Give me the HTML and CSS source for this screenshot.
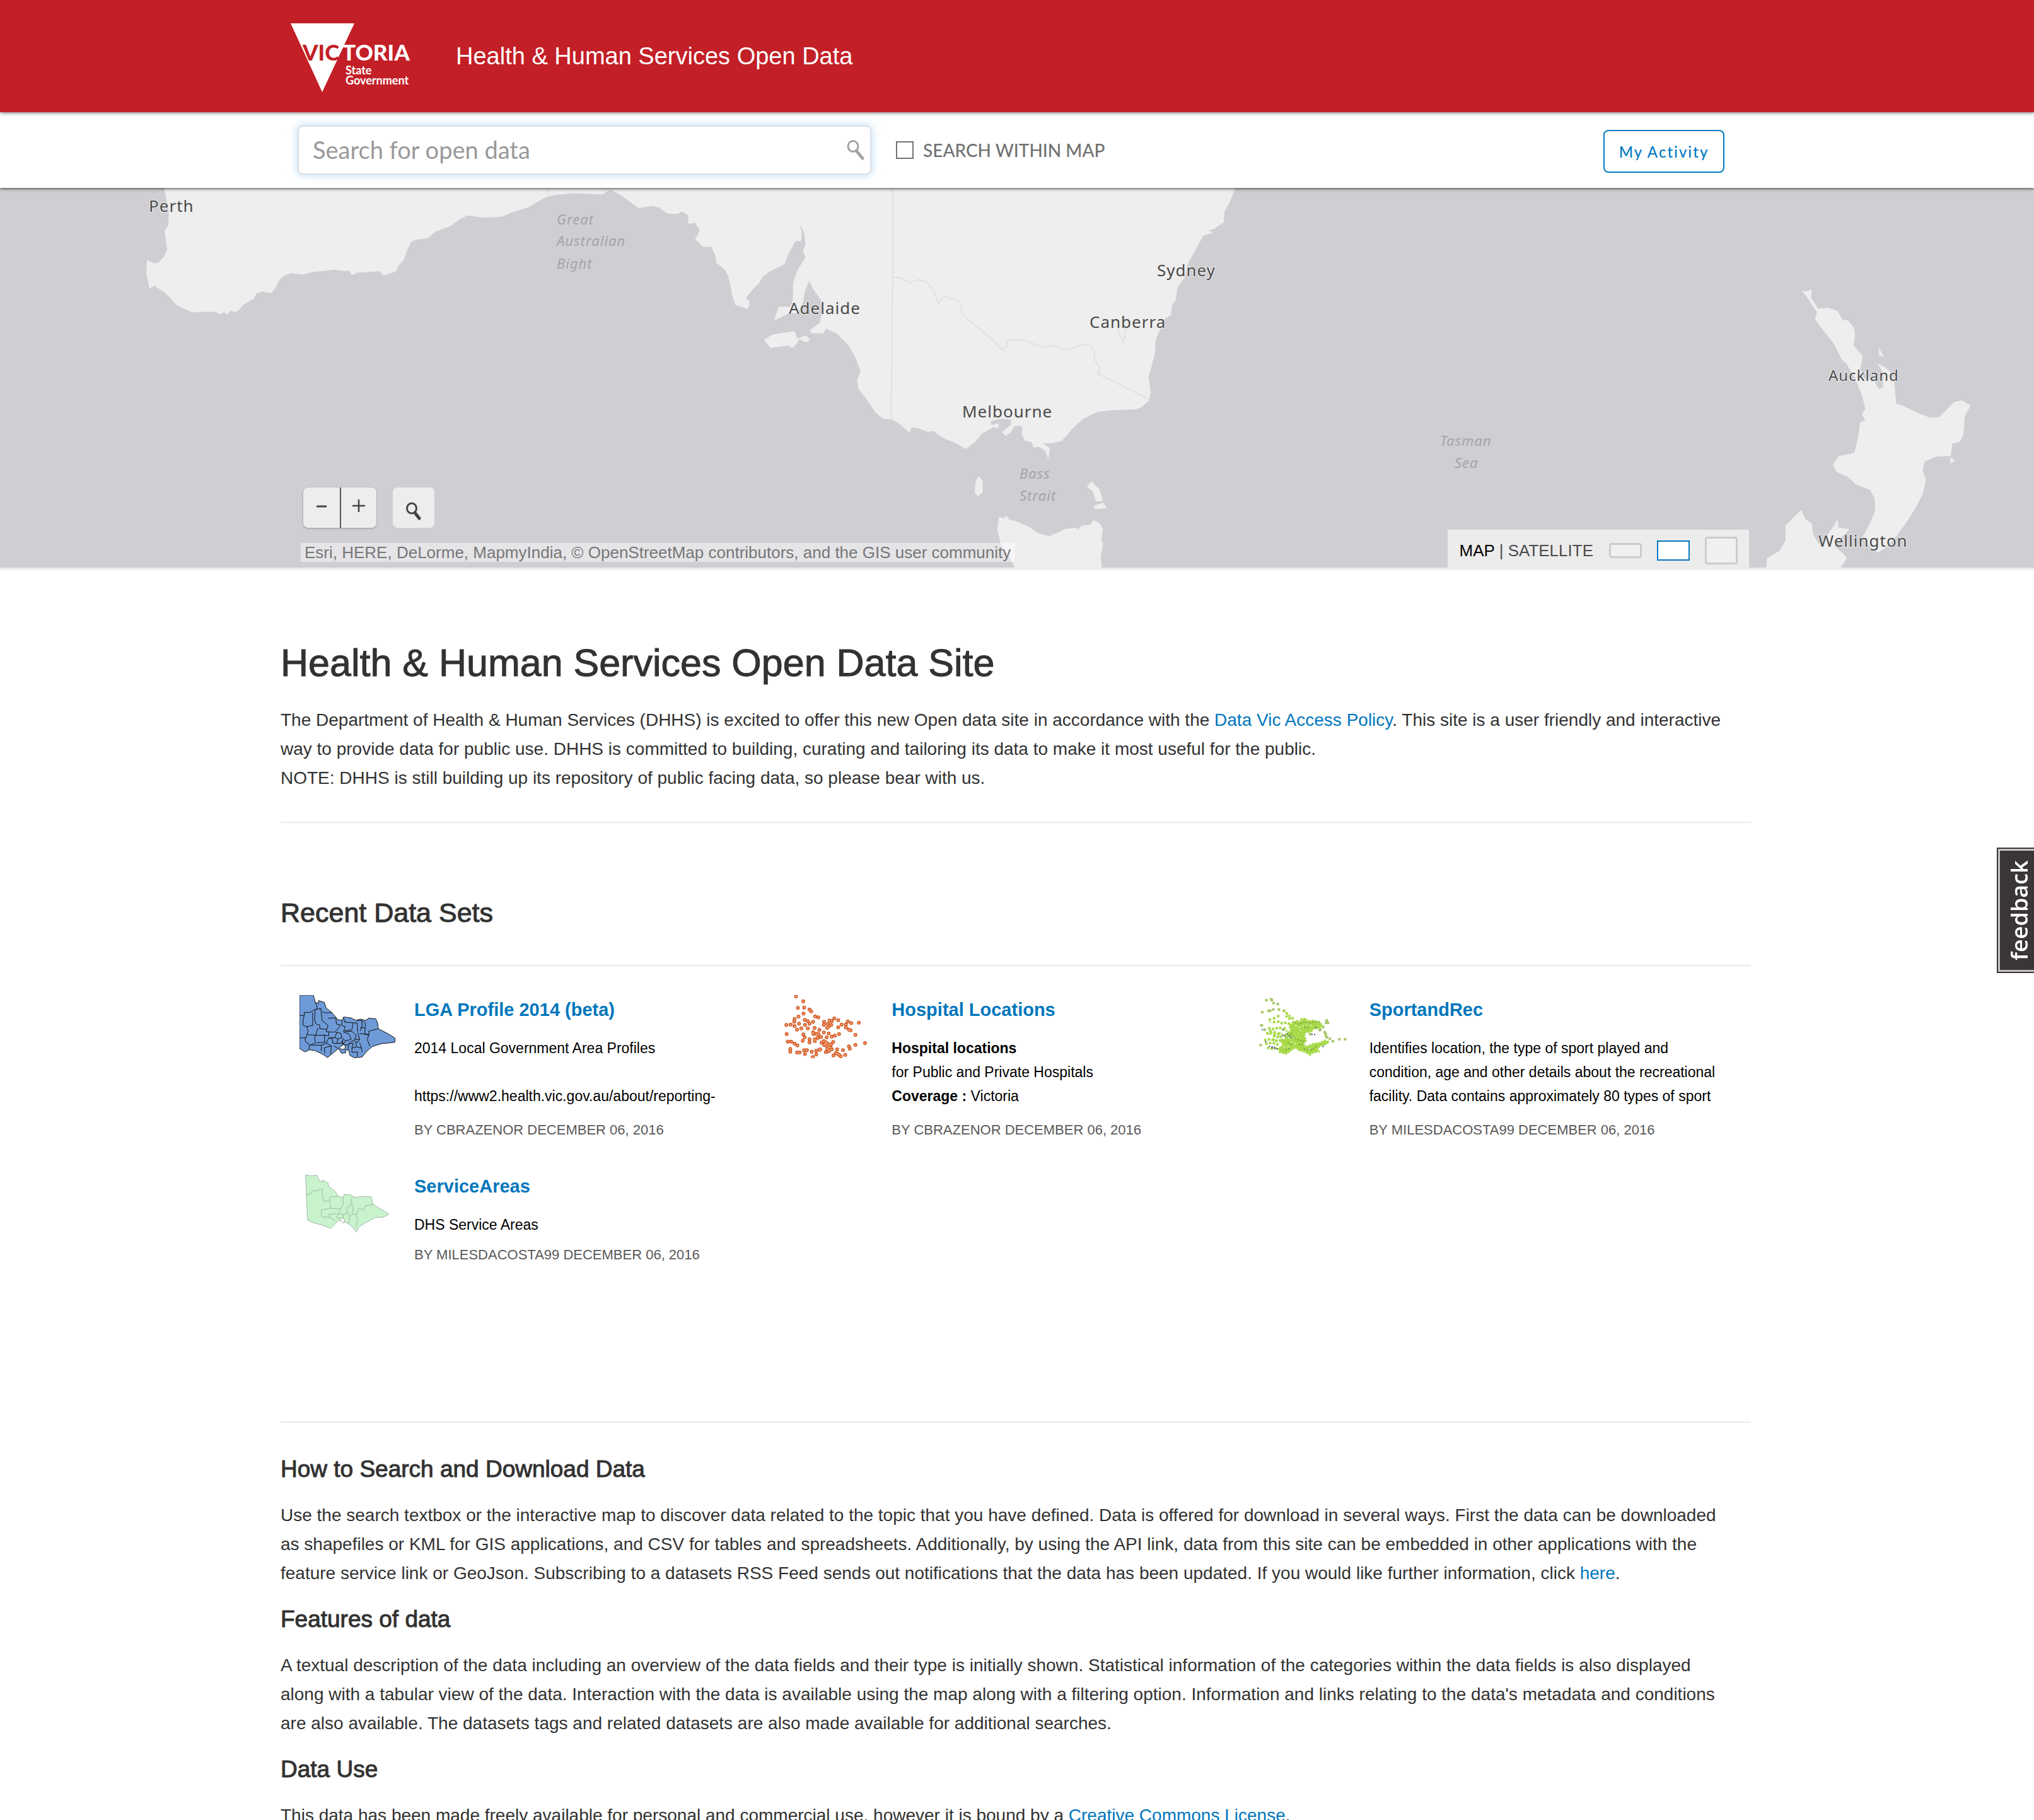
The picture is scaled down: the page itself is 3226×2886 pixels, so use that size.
FILE: index.html
```html
<!DOCTYPE html>
<html lang="en">
<head>
<meta charset="utf-8">
<title>Health &amp; Human Services Open Data</title>
<link rel="stylesheet" href="styles.css">
</head>
<body>
<header class="site-header">
  <div class="wrap brand">
    <svg class="logo" viewBox="0 0 200 112" role="img" aria-label="Victoria State Government">
      <path d="M0 0H101L50 109Z" fill="#fff"/>
      <text x="19" y="59" class="logo-name logo-cut">VIC</text>
      <text x="82" y="59" class="logo-name">TORIA</text>
      <text x="87" y="81" class="logo-sub">State</text>
      <text x="87" y="97" class="logo-sub">Government</text>
    </svg>
    <span class="site-title">Health &amp; Human Services Open Data</span>
  </div>
</header>

<form class="search-bar">
  <div class="wrap search-row">
    <div class="search-box">
      <input type="text" class="search-input" placeholder="Search for open data" aria-label="Search for open data">
      <svg class="search-icon" viewBox="0 0 30 34" aria-hidden="true"><ellipse cx="11" cy="11" rx="8" ry="8.500" fill="none" stroke="#a3a3a3" stroke-width="3"/><path d="M16 18L26 30" stroke="#a3a3a3" stroke-width="5" stroke-linecap="round"/></svg>
    </div>
    <label class="within"><input type="checkbox" class="within-check">SEARCH WITHIN MAP</label>
    <button type="button" class="activity">My Activity</button>
  </div>
</form>

<section class="map" aria-label="Map">
  <svg class="map-canvas" viewBox="0 0 3226 602" preserveAspectRatio="xMidYMin slice">
    <g class="land">
      <g transform="translate(200 -8) scale(.6378 .3954)">
        <path d="M95 0L95 30L106 110L105 170L96 190L102 270L92 300L78 322L68 322L52 308L50 360L58 424L70 412L95 438L112 465L125 490L145 505L165 520L180 517L222 517L236 528L242 518L252 528L260 512L272 518L282 508L290 490L318 465L324 443L338 436L362 442L372 420L380 390L395 370L412 362L440 368L460 358L500 352L515 348L545 354L552 350L562 370L575 360L630 355L640 372L672 355L676 335L690 310L700 265L710 235L725 227L750 222L770 195L805 175L830 145L850 130L890 140L935 135L960 118L1000 98L1040 60L1060 50L1110 42L1185 46L1203 27L1230 48L1275 102L1305 92L1325 98L1345 122L1370 125L1383 115L1398 130L1398 165L1415 160L1427 190L1415 225L1435 257L1455 257L1465 290L1468 320L1490 350L1500 380L1508 455L1515 490L1545 505L1550 470L1540 470L1545 450L1568 410V0Z"/>
        <path class="border" d="M1050 20V54"/>
      </g>
      <g transform="translate(1150 -8) scale(.574 .3954)">
        <path d="M0 0V345L10 380L20 450L28 480L64 502L68 485L58 475L58 460L75 430L95 400L105 375L130 350L165 325L175 285L195 232L210 235L212 200L205 160L218 200L222 250L215 270L222 300L200 350L188 400L187 470L175 520L200 525L215 480L220 440L232 393L245 430L265 470L268 520L262 560L235 590L238 603L270 603L280 585L310 605L340 650L360 700L374 755L365 790L368 825L390 865L415 920L438 948L460 948L480 965L510 1002L515 980L535 985L558 998L575 995L605 1025L640 1045L665 1067L690 1040L710 1005L742 980L755 985L757 965L735 970L735 955L765 945L790 950L790 970L765 1000L775 1015L790 1000L800 975L820 975L820 1010L830 1035L848 1040L852 1062L865 1058L885 1075L893 1108L898 1065L878 1045L905 1044L930 1035L960 985L990 945L1030 918L1070 912L1135 908L1150 900L1172 872L1176 840L1170 780L1187 690L1190 630L1215 545L1232 530L1235 490L1245 470L1250 420L1270 380L1280 320L1305 255L1322 212L1350 200L1335 190L1350 185L1378 158L1380 115L1395 75L1408 28V0Z"/>
        <path d="M108 630L130 608L192 595L200 625L222 612L235 628L225 640L205 628L195 650L185 662L175 652L125 662ZM148 497H180V520L135 553ZM700 1175L712 1195V1240L698 1258L690 1240L692 1200ZM1012 1197L1035 1230L1044 1275L1025 1278L1015 1235L1000 1220ZM1020 1295L1045 1283L1056 1305L1020 1308ZM770 1335L784 1342L778 1352Z"/>
        <path d="M757 1340L800 1355L835 1375L865 1405L895 1417L915 1405L940 1388L970 1383L975 1390L985 1375L1010 1370L1018 1352L1035 1365L1044 1390L1040 1430L1044 1450L1038 1500L1042 1560H805L790 1510L762 1450L752 1390Z"/>
        <ellipse cx="811" cy="990" rx="9" ry="11" fill="none" stroke="#cfced3" stroke-width="3"/>
        <path class="border" d="M463 20V378L459 945M463 378L485 382L510 400L535 388L558 398L575 430L590 482L605 455L648 475L655 525L690 572L725 610L765 668L778 660L780 630L825 630L850 645L885 660L905 652L935 668L970 660L980 648L1005 650L1018 665L1022 710L1035 740L1030 765L1172 868M1105 530L1085 590L1100 640L1106 600L1115 540"/>
      </g>
      <g transform="translate(2250 102) scale(.6224 .3333)">
        <path d="M977 182L988 185L1002 178L1000 215L1018 268L1045 265L1068 280L1080 322L1095 325L1110 360L1112 400L1108 440L1120 470L1132 495L1125 560L1135 600L1160 610L1172 650L1183 645L1185 580L1170 530L1188 545L1205 575L1212 620L1217 720L1240 735L1270 762L1300 785L1325 785L1345 750L1365 712L1385 705L1406 730L1392 780L1388 870L1380 900L1360 910L1356 970L1320 972L1290 995L1284 1040L1293 1080L1285 1150L1265 1220L1245 1280L1220 1345L1195 1400L1170 1430L1150 1400L1130 1360L1150 1290L1163 1230L1162 1170L1150 1130L1115 1105L1095 1070L1065 1045L1056 1010L1070 970L1110 955L1120 880L1125 810L1138 800L1130 770L1138 745L1130 680L1110 590L1090 530L1078 510L1060 440L1035 380L1010 320L1015 285L990 215Z"/>
        <path d="M1173 455L1187 500L1173 490ZM1355 975L1366 990L1355 1008ZM885 1510L888 1455L920 1420L935 1370V1300L975 1225L985 1270L1002 1290L1005 1340L1020 1390L1040 1350L1055 1310L1068 1270L1070 1310L1098 1318L1070 1370L1060 1400L1080 1430L1092 1455L1072 1510Z"/>
      </g>
    </g>
    <g class="city">
      <text x="236" y="38">Perth</text>
      <text x="1251" y="200">Adelaide</text>
      <text x="1526" y="364">Melbourne</text>
      <text x="1835" y="140">Sydney</text>
      <text x="1728" y="222">Canberra</text>
      <text x="2900" y="306" class="small">Auckland</text>
      <text x="2884" y="569">Wellington</text>
    </g>
    <g class="sea">
      <text x="883" y="58">Great</text>
      <text x="883" y="92">Australian</text>
      <text x="883" y="128">Bight</text>
      <text x="1617" y="461">Bass</text>
      <text x="1617" y="496">Strait</text>
      <text x="2284" y="409">Tasman</text>
      <text x="2307" y="444">Sea</text>
    </g>
  </svg>
  <div class="map-tools">
    <div class="wrap map-foot">
      <div class="map-left">
        <div class="zoom-row">
          <div class="zoom-pair">
            <button type="button" class="zoom-btn" aria-label="Zoom out"><svg viewBox="0 0 24 24"><path d="M4 12H20" stroke="#444" stroke-width="3"/></svg></button>
            <button type="button" class="zoom-btn" aria-label="Zoom in"><svg viewBox="0 0 24 24"><path d="M2 11H22M12 1V21" stroke="#444" stroke-width="2.500"/></svg></button>
          </div>
          <button type="button" class="find-btn" aria-label="Find place"><svg viewBox="0 0 26 30"><ellipse cx="10" cy="10" rx="7.500" ry="8" fill="none" stroke="#444" stroke-width="3"/><path d="M15 17L22 26" stroke="#444" stroke-width="5" stroke-linecap="round"/></svg></button>
        </div>
        <div class="credit">Esri, HERE, DeLorme, MapmyIndia, © OpenStreetMap contributors, and the GIS user community</div>
      </div>
      <div class="basemap">
        <span class="basemap-names"><a href="#map" class="on">MAP</a> | <a href="#satellite">SATELLITE</a></span>
        <button type="button" class="size size-s" aria-label="Small map"></button>
        <button type="button" class="size size-m" aria-label="Medium map"></button>
        <button type="button" class="size size-l" aria-label="Large map"></button>
      </div>
    </div>
  </div>
</section>

<main class="wrap content">
  <h1>Health &amp; Human Services Open Data Site</h1>
  <p>The Department of Health &amp; Human Services (DHHS) is excited to offer this new Open data site in accordance with the <a href="#policy">Data Vic Access Policy</a>. This site is a user friendly and interactive way to provide data for public use. DHHS is committed to building, curating and tailoring its data to make it most useful for the public.<br>NOTE: DHHS is still building up its repository of public facing data, so please bear with us.</p>
  <hr>
  <h2>Recent Data Sets</h2>
  <hr class="rule-sets">
  <div class="sets">
    <article class="set">
      <svg class="thumb" viewBox="69 228 298 300" preserveAspectRatio="none" aria-hidden="true">
        <g fill="#6e9bd8" stroke="#111" stroke-width="1">
          <path d="M69 228H112L118 262L128 268V254L146 262L152 290L168 308L188 344L202 348L206 332L228 336L245 348L258 342L275 348L284 338L306 340L312 360L314 388L345 412L366 432V452L345 456L326 458L296 472L278 495L264 522L240 526L226 515L222 490L212 488L213 502L200 505L190 482L176 500L156 525L142 510L118 492L100 488L86 498L69 482Z"/>
          <path fill="none" d="M69 325H84V310H102L118 296L136 292V305L146 312H170M118 262L124 285L122 296M84 325L80 345V372L92 378L110 372V310M118 296L116 345L120 365L132 370V388L154 390M136 310L140 350L158 372L154 390L152 402L176 404M92 378L96 400L92 416L120 418L126 385M158 338L182 336L184 366L196 370L188 390L178 404M202 348L200 372L212 378L206 400L232 392L236 360L208 356M206 338L212 356M236 360H248L250 402M248 350L262 348L264 372L258 398M264 350L274 362L272 410L286 418L284 400L314 388M272 384L258 382M69 432L90 430L92 416M86 430L88 450L102 466L118 456L116 418M118 420L146 418L148 452L122 455M146 418L160 422V402M100 466L98 488M104 466L138 466L136 494M138 466L152 456L160 432L178 430L186 404M152 456L168 470L146 478L148 505M168 470L166 508M160 432L172 436V456L186 458L188 436L178 430M188 436L200 430L198 410L180 404M200 430L212 446L230 438L222 412L206 404M212 402L232 400L246 420L240 440L256 438L250 406M256 410L284 418L280 440L288 472M256 438L250 452L234 444L222 460L220 488M222 460L236 456L232 480L246 474L262 480L264 500M246 474L244 452M262 480L256 455M232 480V500L250 498L248 520M186 458L202 456L212 466L222 462M176 470L190 482M198 446L206 458L212 448M204 440L202 466"/>
          <path d="M206 462L212 470L210 485L200 486L192 478L200 470Z" fill="#fff"/>
        </g>
      </svg>
      <div class="set-body">
        <h3 class="set-title"><a href="#lga">LGA Profile 2014 (beta)</a></h3>
        <div class="excerpt full">2014 Local Government Area Profiles<br><br>https://www2.health.vic.gov.au/about/reporting-</div>
        <div class="byline">BY CBRAZENOR DECEMBER 06, 2016</div>
      </div>
    </article>
    <article class="set">
      <svg class="thumb dots" viewBox="27 108 340 300" preserveAspectRatio="none" aria-hidden="true">
        <defs><path id="hosp" d="M95 114h0M121 137h0M102 169h0M124 167h0M143 176h0M149 185h0M122 196h0M104 210h0M163 209h0M174 214h0M90 221h0M89 235h0M126 226h0M137 232h0M156 235h0M143 244h0M106 244h0M61 250h0M76 248h0M90 255h0M127 250h0M114 266h0M99 272h0M137 266h0M161 264h0M178 274h0M195 235h0M194 250h0M208 245h0M214 229h0M222 232h0M231 219h0M245 227h0M220 250h0M212 256h0M206 264h0M257 248h0M245 261h0M272 247h0M279 233h0M291 241h0M318 239h0M272 262h0M283 272h0M289 275h0M306 297h0M62 293h0M156 284h0M157 293h0M168 292h0M175 293h0M194 286h0M211 290h0M121 295h0M126 308h0M119 325h0M143 318h0M143 333h0M162 326h0M162 318h0M173 311h0M184 307h0M204 309h0M222 305h0M233 301h0M248 293h0M66 329h0M78 329h0M90 338h0M100 347h0M75 364h0M75 377h0M99 381h0M108 380h0M124 370h0M134 370h0M127 388h0M151 377h0M167 373h0M178 368h0M181 366h0M167 390h0M155 403h0M186 334h0M194 327h0M201 332h0M207 338h0M195 345h0M204 350h0M213 345h0M220 342h0M227 331h0M211 356h0M218 357h0M207 364h0M214 370h0M201 379h0M211 375h0M222 366h0M200 340h0M241 366h0M262 370h0M242 386h0M236 384h0M228 395h0M248 392h0M254 399h0M270 392h0M283 352h0M286 363h0M306 345h0M340 336h0"/></defs>
        <use href="#hosp" stroke="#cf5a28" stroke-width="6"/>
        <use href="#hosp" stroke="#f9a070" stroke-width="3"/>
      </svg>
      <div class="set-body">
        <h3 class="set-title"><a href="#hospitals">Hospital Locations</a></h3>
        <div class="excerpt full"><b>Hospital locations</b><br>for Public and Private Hospitals<br><b>Coverage :</b> Victoria</div>
        <div class="byline">BY CBRAZENOR DECEMBER 06, 2016</div>
      </div>
    </article>
    <article class="set">
      <svg class="thumb specks" viewBox="12 24 456 300" preserveAspectRatio="none" aria-hidden="true">
        <path class="speck-area" d="M196 152L212 146L232 150L234 138L256 136L262 148L290 144L318 152L334 168L322 184L296 182L280 198L254 202L248 218L256 240L240 262L262 268L290 256L318 252L346 240L366 246L350 258L322 266L310 282L318 292L290 298L276 308L250 294L222 286L204 272L184 288L160 304L132 296L124 278L146 264L140 246L160 228L150 214L170 204L184 190L176 170Z"/>
        <path class="speck-lime" d="M146 96L164 110L178 124L192 134L182 140L160 122M84 134V156M104 128V160M124 118V134M76 180L100 186L128 178L156 190M66 206L92 204L112 212L140 206M56 238L88 234L120 242L150 236M62 256L96 250L130 262M70 274L100 280L122 272M118 148L142 158L166 154L184 166M72 98H88M124 92H132M150 178L166 196M88 190L82 212M108 196L102 240M128 200L120 232M134 216L148 252"/>
        <path class="speck-white" d="M160 216L180 232L196 220L212 240M206 168L222 178L244 170M260 160L282 168M150 272L180 268M186 246L208 256M268 282L286 276M232 190L220 206"/>
        <path class="speck-green" d="M204 154L226 164L246 152L270 158L296 150L322 152M186 204L200 228L222 238L246 244L236 262L216 254M170 250L196 262M246 280L282 286L310 264M158 284L186 276M248 176L270 182"/>
        <path class="speck-blue" d="M38 168H48M46 186L56 194M92 274L122 280M80 268L108 272M144 186L152 194M282 210L300 212M316 194L330 188M336 270L342 264M142 214L166 220M62 244L72 250M356 146L362 152M300 180L308 172M166 206L188 228"/>
        <path class="speck-dot" d="M68 48h0M90 44h0M94 48h0M102 62h0M122 66h0M48 105h0M78 98h0M86 98h0M100 92h0M127 92h0M152 98h0M354 144h0M352 156h0M360 156h0M345 200h0M350 208h0M350 218h0M356 224h0M370 232h0M384 244h0M415 234h0M442 234h0M40 262h0M46 168h0M60 188h0M322 190h0M338 176h0M276 210h0"/>
      </svg>
      <div class="set-body">
        <h3 class="set-title"><a href="#sport">SportandRec</a></h3>
        <div class="excerpt full">Identifies location, the type of sport played and condition, age and other details about the recreational facility. Data contains approximately 80 types of sport</div>
        <div class="byline">BY MILESDACOSTA99 DECEMBER 06, 2016</div>
      </div>
    </article>
    <article class="set">
      <svg class="thumb" viewBox="69 1068 298 300" preserveAspectRatio="none" aria-hidden="true">
        <g fill="#c8f3cd" stroke="#a3b8a5" stroke-width="1">
          <path d="M88 1082L104 1088L122 1084L132 1112L140 1118V1108L158 1122L160 1138L180 1162L190 1186L204 1190L208 1176L228 1178L242 1190L262 1186L292 1188L298 1224L320 1244L347 1270L330 1284L304 1286L276 1310L254 1330L246 1355L236 1335L222 1316L210 1308L200 1302L190 1300L166 1338L140 1322L110 1310L94 1298Z"/>
          <path fill="none" d="M90 1176L106 1174L108 1160L128 1158L130 1150L140 1152V1182L144 1208H162L164 1188L190 1186M164 1208L166 1242L136 1250L138 1282L164 1286L160 1270L184 1268M166 1242L196 1246L206 1220L204 1190M196 1246L190 1268L206 1272L218 1262L216 1240L228 1230L232 1190M232 1218L236 1240L232 1270L246 1272L254 1240L268 1252L274 1230L298 1224M246 1272L250 1300L244 1330M218 1262L226 1280L232 1270M190 1268L184 1284L196 1290M206 1272L204 1290M164 1286L180 1302M226 1280L222 1316"/>
          <path d="M200 1286L210 1296L206 1314L196 1300Z" fill="#fff"/>
        </g>
      </svg>
      <div class="set-body">
        <h3 class="set-title"><a href="#areas">ServiceAreas</a></h3>
        <div class="excerpt">DHS Service Areas</div>
        <div class="byline">BY MILESDACOSTA99 DECEMBER 06, 2016</div>
      </div>
    </article>
  </div>
  <hr class="rule-help">
  <h4>How to Search and Download Data</h4>
  <p>Use the search textbox or the interactive map to discover data related to the topic that you have defined. Data is offered for download in several ways. First the data can be downloaded as shapefiles or KML for GIS applications, and CSV for tables and spreadsheets. Additionally, by using the API link, data from this site can be embedded in other applications with the feature service link or GeoJson. Subscribing to a datasets RSS Feed sends out notifications that the data has been updated. If you would like further information, click <a href="#here">here</a>.</p>
  <h4>Features of data</h4>
  <p>A textual description of the data including an overview of the data fields and their type is initially shown. Statistical information of the categories within the data fields is also displayed along with a tabular view of the data. Interaction with the data is available using the map along with a filtering option. Information and links relating to the data's metadata and conditions are also available. The datasets tags and related datasets are also made available for additional searches.</p>
  <h4>Data Use</h4>
  <p>This data has been made freely available for personal and commercial use, however it is bound by a <a href="#licence">Creative Commons License</a>.</p>
</main>
<a class="feedback" href="#feedback"><span>feedback</span></a>
</body>
</html>
```
FILE: styles.css
```css
* { box-sizing: border-box; }
body {
  margin: 0;
  background: #fff;
  color: #323232;
  font: 28px/46px "Liberation Sans", Arial, sans-serif;
}
a { color: #0076bc; text-decoration: none; }
button { font: inherit; cursor: pointer; }
.wrap { width: 100%; max-width: 2336px; margin: 0 auto; }

.site-header {
  position: relative;
  z-index: 2;
  background: #c31f27;
  box-shadow: 0 1px 6px rgba(0, 0, 0, .55);
}
.brand { display: flex; align-items: center; height: 178px; padding-left: 16px; }
.logo { width: 200px; height: 112px; margin: 8px 62px 0 0; overflow: visible; }
.logo-name { font: 900 35px Lato, sans-serif; fill: #fff; }
.logo-cut { fill: #c31f27; }
.logo-sub { font: 700 18px Lato, sans-serif; fill: #fff; }
.site-title { color: #fff; font-size: 38px; }

.search-bar {
  position: relative;
  z-index: 1;
  background: #fff;
  box-shadow: 0 1px 5px rgba(0, 0, 0, .75);
}
.search-row { display: flex; align-items: center; height: 120px; padding: 0 46px 0 27px; }
.search-box { position: relative; width: 910px; }
.search-input {
  display: block;
  width: 100%;
  height: 78px;
  padding: 0 70px 2px 22px;
  border: 2px solid #dcdfe3;
  border-radius: 8px;
  background: #fff;
  box-shadow: 0 0 14px rgba(110, 180, 240, .5);
  color: #555;
  font: 38px Lato, sans-serif;
}
.search-input::placeholder { color: #999; opacity: 1; }
.search-icon { position: absolute; right: 10px; top: 22px; width: 30px; height: 34px; }
.within {
  display: flex;
  align-items: center;
  gap: 15px;
  margin-left: 39px;
  color: #727272;
  font: 500 28px Lato, sans-serif;
}
.within-check {
  appearance: none;
  width: 28px;
  height: 28px;
  margin: 0;
  border: 2px solid #727272;
  background: #fff;
}
.activity {
  width: 192px;
  height: 68px;
  margin: 4px 0 0 auto;
  border: 2px solid #0079c1;
  border-radius: 8px;
  background: #fff;
  color: #0079c1;
  font: 500 24px Lato, sans-serif;
  letter-spacing: 2px;
}

.map {
  position: relative;
  background: #cfced3;
  border-bottom: 4px solid #ececec;
}
.map-canvas { display: block; width: 100%; height: 602px; }
.land { fill: #eee; }
.border { fill: none; stroke: #e0e0e0; stroke-width: 2px; vector-effect: non-scaling-stroke; }
.city {
  font: 26px "Noto Sans", sans-serif;
  letter-spacing: 1px;
  fill: #4a4a4a;
  stroke: #eee;
  stroke-width: 2px;
  paint-order: stroke;
}
.city .small { font-size: 24px; }
.sea { font: italic 22px "Noto Sans", sans-serif; letter-spacing: 1px; fill: #a4a4a9; }
.map-tools { position: absolute; left: 0; right: 0; bottom: 0; }
.map-foot {
  display: flex;
  justify-content: space-between;
  align-items: flex-end;
  padding: 0 7px 0 32px;
}
.zoom-row { display: flex; gap: 26px; padding-left: 4px; margin-bottom: 24px; }
.zoom-pair {
  display: flex;
  border-radius: 8px;
  background: #ededed;
  box-shadow: 0 1px 3px rgba(0, 0, 0, .3);
}
.zoom-btn {
  width: 58px;
  height: 64px;
  padding: 0 0 4px;
  border: 0;
  background: none;
}
.zoom-btn + .zoom-btn { border-left: 2px solid #555; }
.zoom-btn svg { display: block; width: 24px; height: 24px; margin: 0 auto; }
.find-btn {
  width: 66px;
  height: 64px;
  padding: 12px 0 0;
  border: 0;
  border-radius: 8px;
  background: #ededed;
}
.find-btn svg { display: block; width: 26px; height: 30px; margin: 0 auto; }
.credit {
  margin-bottom: 9px;
  padding: 0 6px;
  background: rgba(255, 255, 255, .45);
  color: #777;
  font-size: 26px;
  line-height: 30px;
}
.basemap {
  display: flex;
  align-items: center;
  height: 60px;
  padding: 6px 18px 0 19px;
  background: #ececec;
}
.basemap-names { margin-right: 25px; color: #4c4c4c; font-size: 26px; }
.basemap-names a { color: #4c4c4c; }
.basemap-names .on { color: #000; }
.size {
  width: 52px;
  padding: 0;
  border: 3px solid #ccc;
  border-radius: 4px;
  background: #f0f0f0;
}
.size + .size { margin-left: 24px; }
.size-s { height: 24px; }
.size-m { height: 32px; border: 2px solid #0079c1; border-radius: 0; background: #fff; }
.size-l { height: 44px; }

.content { padding: 111px 4px 0 0; }
h1, h2, h4 {
  margin: 0;
  font-weight: 400;
  -webkit-text-stroke: 1px currentColor;
}
h1 { margin-bottom: 32px; font-size: 61px; line-height: 72px; }
h2 { font-size: 43px; line-height: 52px; }
h4 { margin-bottom: 28px; font-size: 37px; line-height: 44px; }
p { margin: 0 0 28px; padding-right: 24px; }
hr { margin: 46px 0 116px; border: 0; border-top: 2px solid #e9e9e9; }
.rule-sets { margin: 57px 0 46px; }
.rule-help { margin: 249px 0 52px; }

.sets {
  display: grid;
  grid-template-columns: repeat(3, 1fr);
  row-gap: 51px;
  padding: 0 30px;
}
.set { display: flex; gap: 30px; }
.set-body { flex: 1; padding: 5px 24px 0 0; }
.thumb { flex: none; width: 152px; height: 100px; }
.thumb path { vector-effect: non-scaling-stroke; }
.dots { fill: none; stroke-linecap: round; }
.specks { fill: none; }
.speck-area { fill: #a8da4a; stroke: #a8da4a; stroke-width: 3px; stroke-dasharray: 3 2; }
.speck-lime { stroke: #a8da4a; stroke-width: 4px; stroke-dasharray: 4 2; }
.speck-white { stroke: #eef5dc; stroke-width: 2px; stroke-dasharray: 2 4; }
.speck-green { stroke: #6f9440; stroke-width: 2px; stroke-dasharray: 2 3; }
.speck-blue { stroke: #4a4d8c; stroke-width: 2px; stroke-dasharray: 2 2; }
.speck-dot { stroke: #a9c96a; stroke-width: 4px; stroke-linecap: square; }
.set-title { margin: 0 0 24px; font-size: 29px; line-height: 36px; }
.excerpt { margin-bottom: 14px; color: #000; font-size: 23px; line-height: 38px; }
.full { min-height: 120px; }
.byline { color: #595959; font-size: 22px; line-height: 30px; }

.feedback {
  position: fixed;
  top: 1344px;
  right: 0;
  width: 59px;
  height: 199px;
  padding: 2px 0 2px 2px;
  background: #3a3635;
  color: #fff;
  font: 600 36px/44px "Open Sans", sans-serif;
}
.feedback span {
  display: block;
  width: 57px;
  height: 195px;
  padding-right: 9px;
  border: 3px solid #c9c5c4;
  border-left: 0;
  text-align: center;
  writing-mode: vertical-rl;
  transform: rotate(180deg);
}
```
